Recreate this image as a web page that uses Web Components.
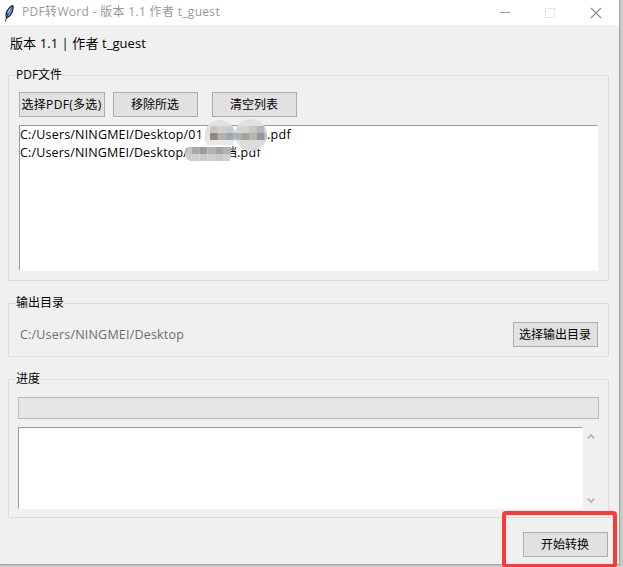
<!DOCTYPE html>
<html lang="zh-CN"><head><meta charset="utf-8"><title>PDF转Word</title>
<style>
html,body{margin:0;width:623px;height:567px;overflow:hidden;background:#d2d2d2}
body{font:12px/16px "Open Sans","Noto Sans CJK SC",sans-serif;color:#000}
</style></head><body>
<pdf-app></pdf-app>
<script>
const define=(name,markup,init)=>customElements.define(name,class extends HTMLElement{
  connectedCallback(){
    if(this.shadowRoot)return;
    this.attachShadow({mode:'open'}).innerHTML=markup;
    if(init)init(this,this.shadowRoot);
  }
});

// Text label spaced so that it fills the width given in its w attribute.
define('fit-text','<style>:host{display:inline-block;white-space:pre;flex:none}span{display:inline-block}</style><span></span>',(el,root)=>{
  const s=root.querySelector('span');
  s.textContent=el.getAttribute('text');
  const w=+el.getAttribute('w');
  const natural=s.getBoundingClientRect().width;
  s.style.letterSpacing=((w-natural)/[...s.textContent].length)+'px';
  el.style.width=w+'px';
});

define('tk-button',`<style>:host{display:flex;flex:none;box-sizing:border-box;width:85px;height:25px;border:1px solid #adadad;background:#e1e1e1;align-items:center;justify-content:center;white-space:nowrap;font-size:12px;padding-right:1px}</style><slot></slot>`);

define('tk-group',`<style>
:host{display:block;box-sizing:border-box;border:1px solid #dcdcdc;margin:0 10px 0 8px}
.legend{display:block;width:fit-content;height:16px;line-height:16px;margin:-9px 0 0 7px;background:#f0f0f0}
</style><div class="legend"><slot name="legend"></slot></div><slot></slot>`);

define('title-bar',`<style>
:host{display:flex;height:25px;background:#fff;color:#999;align-items:center;box-sizing:border-box}
.feather{margin-left:3px;width:13px;height:18px}
.caption{margin-left:6px;margin-top:-1px}
.controls{margin-left:auto;margin-right:17px;display:flex;gap:35px;align-items:center}
svg{display:block;flex:none}
</style>
<svg class="feather" viewBox="0 0 13 18"><path d="M3.500 14C2.300 10 4 5.500 8.500 2 10 1 10.500 2.500 10 5 9.200 9.500 7.200 12 4.500 13.500Z" fill="#5b93d6" stroke="#172237" stroke-width="1.200"/><path d="M2.500 17.500C3.500 12 5.500 8 8.500 4" fill="none" stroke="#182338" stroke-width=".9"/><path d="M4.800 9 7.500 4.500" stroke="#b4d8fa" stroke-width="1.200"/></svg>
<span class="caption"><fit-text text="PDF转Word - 版本 1.1 作者 t_guest" w="198"></fit-text></span>
<div class="controls">
<svg width="10" height="11" viewBox="0 0 10 11"><path d="M0 5.500H10" stroke="#999"/></svg>
<svg width="10" height="10" viewBox="0 0 10 10"><rect x=".5" y=".5" width="9" height="9" fill="none" stroke="#e6e6e6"/></svg>
<svg width="12" height="12" viewBox="0 0 12 12"><path d="M1 1 11 11M11 1 1 11" stroke="#8c8c8c" stroke-width="1.100"/></svg>
</div>`);

// Mosaic that hides part of the listed file names.
define('name-mosaic',`<style>:host{position:absolute;left:162px;top:-7px}svg{display:block}</style><svg width="90" height="46" viewBox="182 119 90 46"></svg>`,(el,root)=>{
  const cell=(x,y,w,h,c)=>`<rect x="${x}" y="${y}" width="${w}" height="${h}" fill="${c}"/>`;
  const row=(x,y,h,cs)=>cs.map((c,i)=>cell(x+i*7.8,y,7.9,h,c)).join('');
  root.querySelector('svg').innerHTML=
  '<defs><clipPath id="a"><circle cx="220" cy="135.500" r="15.500"/><circle cx="251" cy="135" r="16"/></clipPath><clipPath id="b"><path d="M189 147H231V155L230 161H190Q185 159 185 154Q186 148 189 147Z"/></clipPath></defs>'+
  cell(246,146,16,3,'#fff')+cell(225,145,5,18,'#fff')+
  '<g clip-path="url(#a)">'+cell(204,119,64,26,'#e1e1e1')+
  row(210,126,7,['#c9c5c2','#d2d0ce','#cac9cb','#d0d5d8','#d3d5d0','#c6c7c1','#b9b7bc','#d6d6db'])+
  row(210,133,7,['#938982','#b2afad','#a1a8ad','#afb0b4','#a3a69c','#b5b7b2','#97959e','#c0bfc5'])+
  cell(204,140,36,5,'#e8e8e8')+cell(204,145,36,7,'#fff')+cell(240,140,28,12,'#dcdcdc')+'</g>'+
  '<g clip-path="url(#b)">'+row(184,147,7,['#c7c5c7','#aaa8a9','#9d9d9b','#b1b2b2','#a4a5a8','#b7b2b0'])+
  row(184,154,8,['#cfcfcf','#d0cfd0','#c9caca','#cfcece','#c8c9cb','#d1d0d1'])+'</g>';
});

define('file-list',`<style>
:host{display:block;position:relative;box-sizing:border-box;width:579px;height:146px;background:#fff;border:1px solid #fff;border-top-color:#999;border-left-color:#999}
.row{height:18px;line-height:18px;font-size:12.500px;display:flex}
.gap{width:64px}.glyph{width:12px;margin-left:37px;font-size:12px}
</style>
<div class="row"><fit-text text="C:/Users/NINGMEI/Desktop/01" w="183"></fit-text><span class="gap"></span><fit-text text=".pdf" w="24"></fit-text></div>
<div class="row"><fit-text text="C:/Users/NINGMEI/Desktop/" w="168"></fit-text><span class="glyph">档</span><fit-text text=".pdf" w="24"></fit-text></div>
<name-mosaic></name-mosaic>`);

define('log-box',`<style>
:host{display:flex;height:82px;width:581px}
.text{box-sizing:border-box;width:565px;background:#fff;border:1px solid #fff;border-top-color:#999;border-left-color:#999}
.scroll{flex:1;display:flex;flex-direction:column;justify-content:space-between;align-items:center;padding:6px 1px 5px 0;box-sizing:border-box}
svg{display:block}
</style><div class="text"></div><div class="scroll">
<svg width="8" height="7" viewBox="0 0 8 7"><path d="M.7 5.500 4 2 7.300 5.500" fill="none" stroke="#bdbdbd" stroke-width="2"/></svg>
<svg width="8" height="7" viewBox="0 0 8 7"><path d="M.7 1.500 4 5 7.300 1.500" fill="none" stroke="#bdbdbd" stroke-width="2"/></svg></div>`);

define('pdf-app',`<style>
:host{display:block;box-sizing:border-box;width:620px;height:565px;background:#f0f0f0;border-right:1px solid #a5a5a5;border-bottom:1px solid #a5a5a5;box-shadow:1px 1px 3px #9995}
.version{height:50px;padding:10px 0 0 10px;box-sizing:border-box;font-size:13px}
.files{height:206px}.output{height:54px;margin-top:22px}.progress{height:139px;margin-top:22px}
.tools{display:flex;margin:9px 0 8px 10px}
.wide{width:86px}.tools tk-button:nth-child(2){margin-left:8px}.tools tk-button:nth-child(3){margin-left:14px}
file-list{margin-left:10px}
.dest{display:flex;align-items:center;justify-content:space-between;margin:11px 10px 0 11px;color:#6d6d6d;font-size:12.500px}
.dest tk-button{color:#000}
.bar{width:581px;height:22px;box-sizing:border-box;margin:10px 0 8px 9px;background:#e6e6e6;border:1px solid #bcbcbc}
log-box{margin-left:9px}
.actions{display:flex;justify-content:flex-end;padding:14px 11px 0 0}
.highlight{position:absolute;left:502px;top:511px;width:115px;height:57px;box-sizing:border-box;border:4px solid #ff3737;border-radius:4px}
</style>
<title-bar></title-bar>
<div class="version"><fit-text text="版本 1.1 | 作者 t_guest" w="136"></fit-text></div>
<tk-group class="files"><fit-text slot="legend" text="PDF文件" w="46"></fit-text>
<div class="tools"><tk-button class="wide"><fit-text text="选择PDF(多选)" w="80"></fit-text></tk-button><tk-button>移除所选</tk-button><tk-button>清空列表</tk-button></div>
<file-list></file-list></tk-group>
<tk-group class="output"><span slot="legend">输出目录</span>
<div class="dest"><fit-text text="C:/Users/NINGMEI/Desktop" w="164"></fit-text><tk-button>选择输出目录</tk-button></div></tk-group>
<tk-group class="progress"><span slot="legend">进度</span><div class="bar"></div><log-box></log-box></tk-group>
<div class="actions"><tk-button>开始转换</tk-button></div>
<div class="highlight"></div>`);
</script></body></html>
